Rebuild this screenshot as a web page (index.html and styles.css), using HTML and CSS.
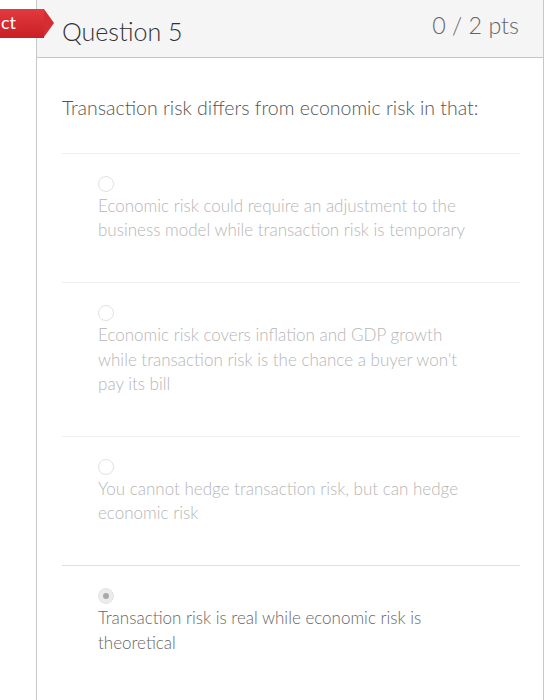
FILE: index.html
```html
<!DOCTYPE html>
<html>
<head>
<meta charset="utf-8">
<link rel="stylesheet" href="styles.css">
</head>
<body>
<div class="card">
  <div class="tag">ct</div>
  <div class="header">
    <h2 class="title">Question 5</h2>
    <div class="pts">0 / 2 pts</div>
  </div>
  <div class="content">
    <p class="question">Transaction risk differs from economic risk in that:</p>
    <div class="answers">
      <div class="answer">
        <span class="radio"></span>
        <div class="text">Economic risk could require an adjustment to the business model while transaction risk is temporary</div>
      </div>
      <div class="answer">
        <span class="radio"></span>
        <div class="text">Economic risk covers inflation and GDP growth while transaction risk is the chance a buyer won't pay its bill</div>
      </div>
      <div class="answer">
        <span class="radio"></span>
        <div class="text">You cannot hedge transaction risk, but can hedge economic risk</div>
      </div>
      <div class="answer selected">
        <span class="radio"></span>
        <div class="text">Transaction risk is real while economic risk is theoretical</div>
      </div>
    </div>
  </div>
</div>
</body>
</html>
```

FILE: styles.css
```css
* { box-sizing: border-box; }
html, body { margin: 0; padding: 0; background: #fff; }
body {
  font-family: Lato, "Open Sans", "Liberation Sans", sans-serif;
  font-weight: 300;
  width: 546px;
  height: 700px;
  overflow: hidden;
}
.card {
  position: relative;
  margin-left: 36px;
  width: 508px;
  min-height: 700px;
  border-left: 1px solid #c4c8cb;
  border-right: 1px solid #c4c8cb;
}
.tag {
  position: absolute;
  left: -37px;
  top: 9px;
  width: 44px;
  height: 29px;
  background: linear-gradient(#e23a3f, #c91f25);
  color: #fff;
  font-size: 18px;
  font-weight: 400;
  line-height: 27px;
  padding-left: 1px;
  z-index: 2;
}
.tag::after {
  content: "";
  position: absolute;
  right: -10px;
  top: 0;
  border-top: 14.5px solid transparent;
  border-bottom: 14.5px solid transparent;
  border-left: 10px solid #d62d32;
}
.header {
  display: flex;
  justify-content: space-between;
  align-items: center;
  height: 58px;
  background: #f5f5f5;
  border-bottom: 1px solid #c4c8cb;
  padding: 0 24px 0 25px;
}
.title {
  margin: 0;
  font-weight: 300;
  font-size: 25px;
  color: #333;
  padding-top: 4px;
}
.pts {
  font-size: 23.3px;
  color: #666;
  padding-bottom: 7px;
}
.content {
  padding: 0 23px 0 25px;
}
.question {
  margin: 0;
  padding: 38px 0 33px;
  font-size: 19.5px;
  line-height: 24px;
  color: #555;
}
.answer {
  border-top: 1px solid #eee;
  padding: 22px 0 40px 36px;
}
.answer:last-child { border-top-color: #ddd; }
.radio {
  display: block;
  width: 16px;
  height: 16px;
  border-radius: 50%;
  border: 1px solid #e2e2e2;
  background: #fff;
  position: relative;
}
.selected .radio {
  background: #ececec;
  border-color: #e4e4e4;
}
.selected .radio::after {
  content: "";
  position: absolute;
  left: 4px;
  top: 4px;
  width: 6px;
  height: 6px;
  border-radius: 50%;
  background: #a9a9a9;
}
.text {
  margin-top: 2px;
  font-size: 17px;
  line-height: 24.2px;
  color: #b6b6b6;
  max-width: 375px;
}
.selected .text { color: #666; }
```
